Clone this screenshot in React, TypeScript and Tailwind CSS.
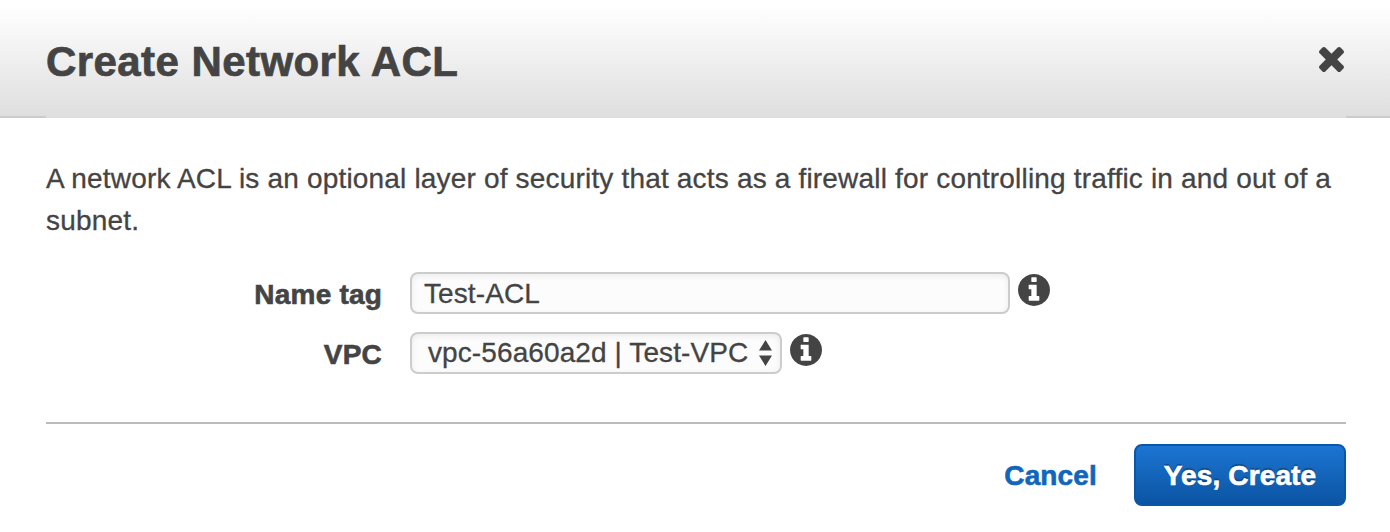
import React from "react";

function CloseIcon() {
  return (
    <svg viewBox="110 366 1188 1188" className="block h-[25px] w-[25px] fill-[#444]" aria-hidden="true">
      <path d="M1298 1322q0 40-28 68l-136 136q-28 28-68 28t-68-28l-294-294-294 294q-28 28-68 28t-68-28l-136-136q-28-28-28-68t28-68l294-294-294-294q-28-28-28-68t28-68l136-136q28-28 68-28t68 28l294 294 294-294q28-28 68-28t68 28l136 136q28 28 28 68t-28 68l-294 294 294 294q28 28 28 68z" />
    </svg>
  );
}

function InfoIcon() {
  return (
    <svg viewBox="128 128 1536 1536" className="mt-0.5 ml-2 block h-8 w-8 shrink-0 fill-[#444]" aria-hidden="true">
      <path d="M1152 1376v-160q0-14-9-23t-23-9h-96v-512q0-14-9-23t-23-9h-320q-14 0-23 9t-9 23v160q0 14 9 23t23 9h96v320h-96q-14 0-23 9t-9 23v160q0 14 9 23t23 9h448q14 0 23-9t9-23zm-128-896v-160q0-14-9-23t-23-9h-192q-14 0-23 9t-9 23v160q0 14 9 23t23 9h192q14 0 23-9t9-23zm640 416q0 209-103 385.500t-279.500 279.500-385.500 103-385.500-103-279.500-279.500-103-385.500 103-385.500 279.500-279.500 385.500-103 385.500 103 279.500 279.500 103 385.500z" />
    </svg>
  );
}

function Field({ label, children }: { label: string; children: React.ReactNode }) {
  return (
    <div className="flex h-[42px] items-start">
      <div className="w-[336px] pt-0.5 text-right leading-[42px] font-bold tracking-[0.2px] [-webkit-text-stroke:0.6px]">
        {label}
      </div>
      <div className="ml-7 flex items-start">
        {children}
        <InfoIcon />
      </div>
    </div>
  );
}

export default function App() {
  return (
    <div className="flex h-[532px] w-[1390px] flex-col bg-white font-['Liberation_Sans',Arial,sans-serif] text-[28px] text-[#444] [-webkit-text-stroke:0.3px]">
      <header className="flex h-[118px] shrink-0 flex-col bg-linear-to-b from-white from-5% to-[#dedede]">
        <div className="flex h-[116px] items-start justify-between px-[46px]">
          <h1 className="mt-[38px] text-[42px] leading-[48px] font-bold tracking-[0.43px] whitespace-nowrap [-webkit-text-stroke:0.7px]">
            Create Network ACL
          </h1>
          <button className="mt-[47px]" aria-label="Close">
            <CloseIcon />
          </button>
        </div>
        <div className="flex h-0.5 justify-between">
          <span className="w-[46px] bg-[#ccc]" />
          <span className="w-[44px] bg-[#ccc]" />
        </div>
      </header>

      <main className="flex flex-col pt-10 pr-11 pl-[46px]">
        <p className="leading-[42px] tracking-[0.18px]">
          A network ACL is an optional layer of security that acts as a firewall for controlling traffic in and out of a
          subnet.
        </p>
        <div className="mt-[30px] flex flex-col gap-[18px]">
          <Field label="Name tag">
            <input
              defaultValue="Test-ACL"
              className="h-[42px] w-[600px] rounded-lg border-2 border-[#ccc] bg-[#fcfcfc] px-3 pt-0.5 tracking-[0.1px] shadow-[inset_0_2px_6px_rgba(0,0,0,0.07)] outline-none"
            />
          </Field>
          <Field label="VPC">
            <button className="flex h-[42px] w-[372px] items-center justify-between rounded-lg border-2 border-[#ccc] bg-[#fcfcfc] pr-2 pl-4 leading-[38px] tracking-[0.1px] whitespace-nowrap shadow-[inset_0_2px_6px_rgba(0,0,0,0.07)]">
              <span>vpc-56a60a2d | Test-VPC</span>
              <svg viewBox="0 0 13 26" className="h-[26px] w-[13px] fill-[#444]" aria-hidden="true">
                <path d="M6.500 0L13 10.500H0zM0 15.500H13L6.500 26z" />
              </svg>
            </button>
          </Field>
        </div>
        <footer className="mt-12 flex items-center justify-end border-t-2 border-[#bbb] pt-5 font-bold tracking-[0.15px] [-webkit-text-stroke:0.6px]">
          <a className="mr-[37px] pt-0.5 text-[#1166bb]">Cancel</a>
          <button className="h-[62px] w-[212px] rounded-lg border-2 border-[#0a57a8] bg-linear-to-b from-[#1c75d2] to-[#0b54a3] pt-0.5 text-white [text-shadow:0_-2px_1px_rgba(0,0,0,0.3)]">
            Yes, Create
          </button>
        </footer>
      </main>
    </div>
  );
}
